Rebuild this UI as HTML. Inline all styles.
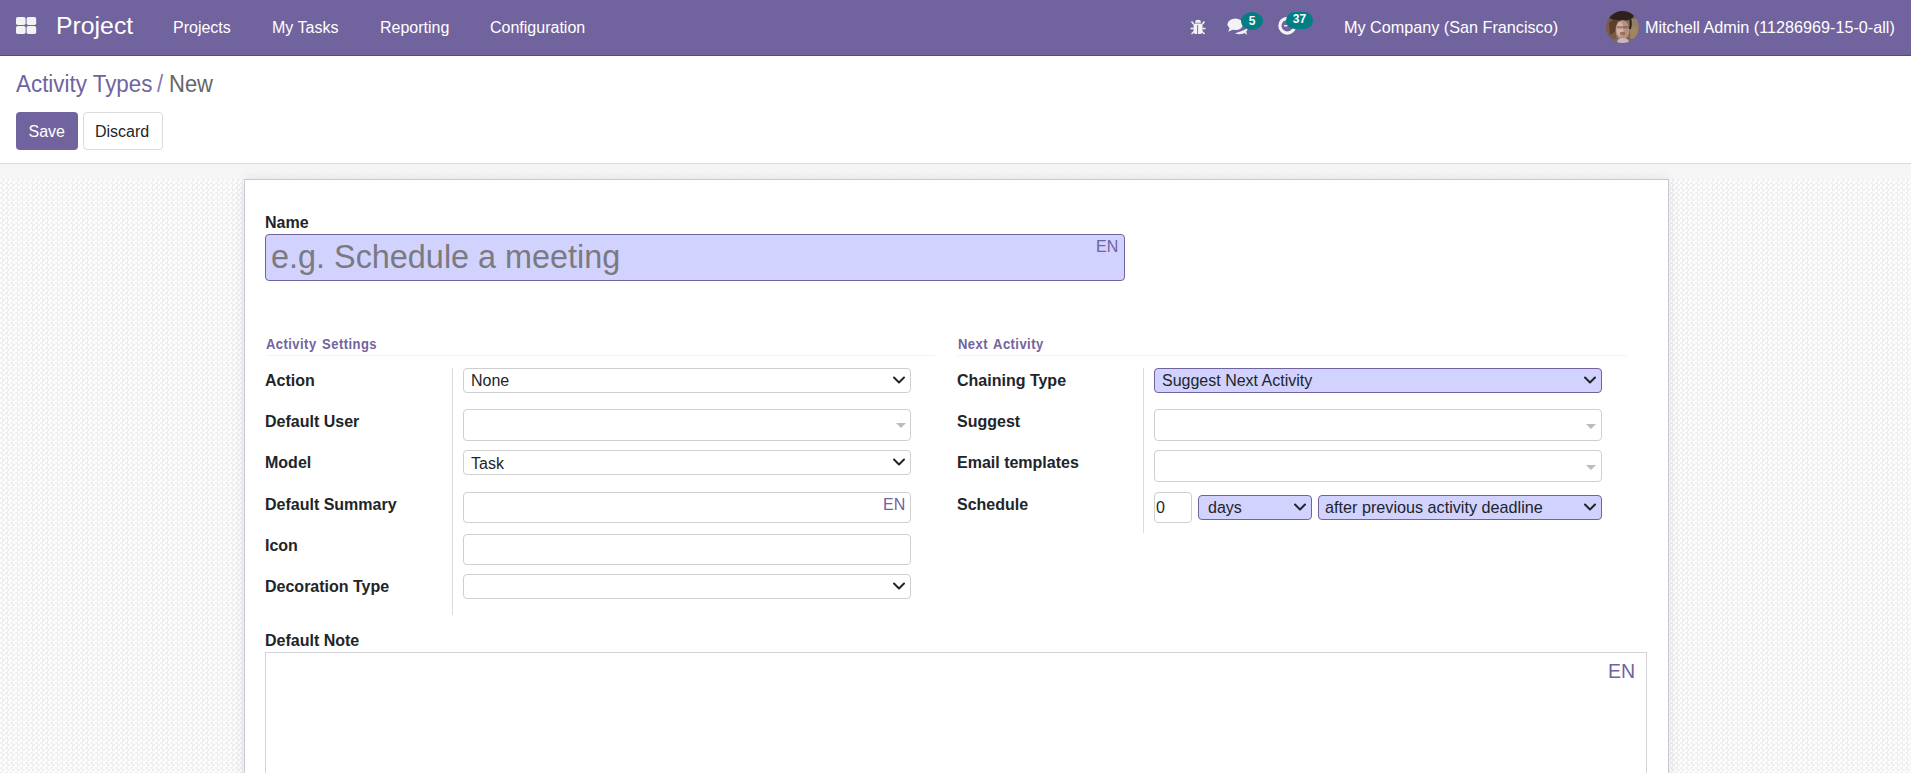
<!DOCTYPE html>
<html><head><meta charset="utf-8">
<style>
*{box-sizing:border-box;margin:0;padding:0}
html,body{width:1911px;height:773px;overflow:hidden;background:#fff;font-family:"Liberation Sans",sans-serif;color:#212529}
.a{position:absolute;white-space:nowrap}
#nav{position:absolute;left:0;top:0;width:1911px;height:56px;background:#71639e;border-bottom:1px solid #554a7e}
.nt{color:#fff;font-size:16px;line-height:20px;top:18px}
#cp{position:absolute;left:0;top:56px;width:1911px;height:108px;background:#fff;border-bottom:1px solid #dcdcdc}
#bg{position:absolute;left:0;top:164px;width:1911px;height:609px;background:repeating-conic-gradient(#f0f0f0 0 25%,#fdfdfd 0 50%) 0 0/5px 5px}
#bgtop{position:absolute;left:0;top:164px;width:1911px;height:15px;background:linear-gradient(rgba(244,245,245,.95),rgba(246,246,246,.7))}
#sheet{position:absolute;left:244px;top:179px;width:1425px;height:620px;background:#fff;border:1px solid #c9c6d9;box-shadow:0 0 12px rgba(0,0,0,.09)}
.t{position:absolute;white-space:nowrap;font-size:16px;line-height:20px;color:#212529}
.lbl{font-weight:bold}
.box{position:absolute;background:#fff;border:1px solid #cfcfcf;border-radius:4px}
.req{background:#d2d2ff;border-color:#71639e}
.en{position:absolute;font-size:16px;line-height:20px;color:#71639e}
.sep{position:absolute;width:1px;background:#dcdcdc}
.grp{position:absolute;white-space:nowrap;font-weight:bold;font-size:13px;letter-spacing:.45px;word-spacing:1.5px;color:#71639e;line-height:16px;transform:scaleY(1.06);transform-origin:0 12px}
.hr{position:absolute;height:1px;background:#f3f3f3}
.chev{position:absolute}
.tri{position:absolute;width:0;height:0;border-left:5px solid transparent;border-right:5px solid transparent;border-top:5px solid #bcbcbc}
.badge{position:absolute;background:#017e84;color:#fff;font-weight:bold;font-size:12px;line-height:18px;text-align:center;border-radius:9px;height:18px}
</style></head><body>
<div id="nav">
  <svg class="a" style="left:16px;top:17px" width="21" height="17" viewBox="0 0 21 17">
    <rect x="0" y="0" width="9.6" height="8" rx="1.8" fill="#f3f3f3"/>
    <rect x="10.6" y="0" width="9.6" height="8" rx="1.8" fill="#f3f3f3"/>
    <rect x="0" y="9" width="9.6" height="8" rx="1.8" fill="#f3f3f3"/>
    <rect x="10.6" y="9" width="9.6" height="8" rx="1.8" fill="#f3f3f3"/>
  </svg>
  <div class="a" style="left:56px;top:11px;font-size:24.8px;line-height:30px;color:#fff">Project</div>
  <div class="a nt" style="left:173px">Projects</div>
  <div class="a nt" style="left:272px">My Tasks</div>
  <div class="a nt" style="left:380px">Reporting</div>
  <div class="a nt" style="left:490px">Configuration</div>
  <!-- bug -->
  <svg class="a" style="left:1190px;top:19px" width="16" height="16" viewBox="0 0 16 16">
    <path d="M5 3.8 A3 3 0 0 1 11 3.8 Z" fill="#f3f3f3"/>
    <rect x="3.5" y="4.6" width="9" height="10.4" rx="2.5" fill="#f3f3f3"/>
    <path d="M7.6 6v9" stroke="#71639e" stroke-width="0.9"/>
    <path d="M1.5 2.5L4 5.5M14.5 2.5L12 5.5M0.5 9.5H3.5M15.5 9.5H12.5M1.5 15L4 12.5M14.5 15L12 12.5" stroke="#f3f3f3" stroke-width="1.5"/>
  </svg>
  <!-- chat -->
  <svg class="a" style="left:1227px;top:18px" width="21" height="18" viewBox="0 0 21 18">
    <path d="M8 15.5 C11 16.5 15 16.5 17.5 15 L20 17 L19.2 13.6 C20.5 12.5 20.8 11 20.3 9.8 C18 12.5 13 13.5 8 15.5Z" fill="#f3f3f3"/>
    <ellipse cx="8.3" cy="6.3" rx="7.8" ry="5.8" fill="#f3f3f3"/>
    <path d="M2.6 10 L1.2 13.8 L6 11.5 Z" fill="#f3f3f3"/>
  </svg>
  <div class="badge" style="left:1241px;top:12px;width:22px;border-radius:11px/9px">5</div>
  <!-- clock -->
  <svg class="a" style="left:1278px;top:16px" width="19" height="19" viewBox="0 0 19 19">
    <circle cx="9.3" cy="9.7" r="7.4" fill="none" stroke="#f3f3f3" stroke-width="3.2"/>
    <path d="M6 9.7H9.5" stroke="#f3f3f3" stroke-width="1.4"/>
  </svg>
  <div class="badge" style="left:1286px;top:12px;width:27px;height:17px;line-height:15px">37</div>
  <div class="a nt" style="left:1344px;font-size:16.2px;top:17px">My Company (San Francisco)</div>
  <svg class="a" style="left:1606px;top:11px" width="33" height="32" viewBox="0 0 33 32">
    <defs><clipPath id="av"><ellipse cx="16.5" cy="16" rx="16.3" ry="16"/></clipPath></defs>
    <g clip-path="url(#av)">
      <rect x="0" y="0" width="33" height="32" fill="#7d6655"/>
      <rect x="0" y="6" width="10" height="22" fill="#7a5a45"/>
      <rect x="24" y="8" width="9" height="20" fill="#93806a"/>
      <ellipse cx="15" cy="4" rx="13" ry="6" fill="#2e211d"/>
      <path d="M3 12 Q8 7 12 9 L10 20 L4 24Z" fill="#5c3e2e"/>
      <ellipse cx="16.5" cy="19" rx="7" ry="10" fill="#b8907f"/>
      <ellipse cx="14" cy="18" rx="3.5" ry="7" fill="#d8bcb6" opacity=".8"/>
      <rect x="11" y="15" width="12" height="2.5" fill="#5d4538" opacity=".45"/>
      <rect x="14" y="21" width="5" height="3" fill="#8a5a40" opacity=".7"/>
      <path d="M23 5 Q26 10 24 18" stroke="#2e211d" stroke-width="2" fill="none"/>
      <ellipse cx="17" cy="31" rx="6" ry="4" fill="#c9b5c8"/>
      <ellipse cx="28" cy="22" rx="4" ry="6" fill="#a8865a" opacity=".7"/>
    </g>
  </svg>
  <div class="a nt" style="left:1645px;font-size:16.2px;top:17px">Mitchell Admin (11286969-15-0-all)</div>
</div>
<div id="cp">
  <div class="a" style="left:16px;top:15px;font-size:22.4px;line-height:28px;color:#71639e;transform:scaleY(1.1);transform-origin:0 21px">Activity Types</div>
  <div class="a" style="left:157px;top:15px;font-size:22px;line-height:28px;color:#8178a8;transform:scaleY(1.1);transform-origin:0 21px">/</div>
  <div class="a" style="left:169px;top:15px;font-size:22px;line-height:28px;color:#666;transform:scaleY(1.1);transform-origin:0 21px">New</div>
  <div class="a" style="left:16px;top:56px;width:62px;height:38px;background:#71639e;border-radius:4px"></div>
  <div class="t" style="left:28.5px;top:66px;color:#fff">Save</div>
  <div class="a" style="left:83px;top:56px;width:80px;height:38px;background:#fff;border:1px solid #dcdcdc;border-radius:4px"></div>
  <div class="t" style="left:95px;top:66px">Discard</div>
</div>
<div id="bg"></div><div id="bgtop"></div>
<div id="sheet"></div>

<div class="t lbl" style="left:265px;top:213px">Name</div>
<div class="box req" style="left:265px;top:234px;width:860px;height:47px"></div>
<div class="a" style="left:271px;top:237px;font-size:32.4px;line-height:40px;color:#7a7a80">e.g. Schedule a meeting</div>
<div class="en" style="left:1096px;top:237px">EN</div>

<div class="grp" style="left:266px;top:337px">Activity Settings</div>
<div class="hr" style="left:266px;top:355px;width:669px"></div>
<div class="grp" style="left:958px;top:337px">Next Activity</div>
<div class="hr" style="left:957px;top:355px;width:670px"></div>

<!-- left column -->
<div class="sep" style="left:452px;top:368px;height:247px"></div>
<div class="t lbl" style="left:265px;top:371px">Action</div>
<div class="t lbl" style="left:265px;top:412px">Default User</div>
<div class="t lbl" style="left:265px;top:453px">Model</div>
<div class="t lbl" style="left:265px;top:495px">Default Summary</div>
<div class="t lbl" style="left:265px;top:536px">Icon</div>
<div class="t lbl" style="left:265px;top:577px">Decoration Type</div>

<div class="box" style="left:463px;top:368px;width:448px;height:25px"></div>
<div class="t" style="left:471px;top:371px">None</div>
<svg class="chev" style="left:893px;top:376px" width="12" height="9" viewBox="0 0 12 9"><path d="M1 1.5L6 6.5L11 1.5" fill="none" stroke="#212529" stroke-width="2" stroke-linecap="round" stroke-linejoin="round"/></svg>

<div class="box" style="left:463px;top:409px;width:448px;height:32px"></div>
<div class="tri" style="left:896px;top:423px"></div>

<div class="box" style="left:463px;top:450px;width:448px;height:25px"></div>
<div class="t" style="left:471px;top:454px">Task</div>
<svg class="chev" style="left:893px;top:458px" width="12" height="9" viewBox="0 0 12 9"><path d="M1 1.5L6 6.5L11 1.5" fill="none" stroke="#212529" stroke-width="2" stroke-linecap="round" stroke-linejoin="round"/></svg>

<div class="box" style="left:463px;top:492px;width:448px;height:31px"></div>
<div class="en" style="left:883px;top:495px">EN</div>

<div class="box" style="left:463px;top:534px;width:448px;height:31px"></div>

<div class="box" style="left:463px;top:574px;width:448px;height:25px"></div>
<svg class="chev" style="left:893px;top:582px" width="12" height="9" viewBox="0 0 12 9"><path d="M1 1.5L6 6.5L11 1.5" fill="none" stroke="#212529" stroke-width="2" stroke-linecap="round" stroke-linejoin="round"/></svg>

<!-- right column -->
<div class="sep" style="left:1143px;top:368px;height:165px"></div>
<div class="t lbl" style="left:957px;top:371px">Chaining Type</div>
<div class="t lbl" style="left:957px;top:412px">Suggest</div>
<div class="t lbl" style="left:957px;top:453px">Email templates</div>
<div class="t lbl" style="left:957px;top:495px">Schedule</div>

<div class="box req" style="left:1154px;top:368px;width:448px;height:25px"></div>
<div class="t" style="left:1162px;top:371px">Suggest Next Activity</div>
<svg class="chev" style="left:1584px;top:376px" width="12" height="9" viewBox="0 0 12 9"><path d="M1 1.5L6 6.5L11 1.5" fill="none" stroke="#212529" stroke-width="2" stroke-linecap="round" stroke-linejoin="round"/></svg>

<div class="box" style="left:1154px;top:409px;width:448px;height:32px"></div>
<div class="tri" style="left:1586px;top:424px"></div>

<div class="box" style="left:1154px;top:450px;width:448px;height:32px"></div>
<div class="tri" style="left:1586px;top:465px"></div>

<div class="box" style="left:1154px;top:492px;width:38px;height:31px"></div>
<div class="t" style="left:1156px;top:498px">0</div>
<div class="box req" style="left:1198px;top:495px;width:114px;height:25px"></div>
<div class="t" style="left:1208px;top:498px">days</div>
<svg class="chev" style="left:1294px;top:503px" width="12" height="9" viewBox="0 0 12 9"><path d="M1 1.5L6 6.5L11 1.5" fill="none" stroke="#212529" stroke-width="2" stroke-linecap="round" stroke-linejoin="round"/></svg>
<div class="box req" style="left:1318px;top:495px;width:284px;height:25px"></div>
<div class="t" style="left:1325px;top:497px;font-size:16.2px">after previous activity deadline</div>
<svg class="chev" style="left:1584px;top:503px" width="12" height="9" viewBox="0 0 12 9"><path d="M1 1.5L6 6.5L11 1.5" fill="none" stroke="#212529" stroke-width="2" stroke-linecap="round" stroke-linejoin="round"/></svg>

<!-- note -->
<div class="t lbl" style="left:265px;top:631px">Default Note</div>
<div class="a" style="left:265px;top:652px;width:1382px;height:200px;border:1px solid #d4d4d8;background:#fff"></div>
<div class="a" style="left:1608px;top:660px;font-size:19.5px;line-height:22px;color:#71639e">EN</div>
</body></html>
